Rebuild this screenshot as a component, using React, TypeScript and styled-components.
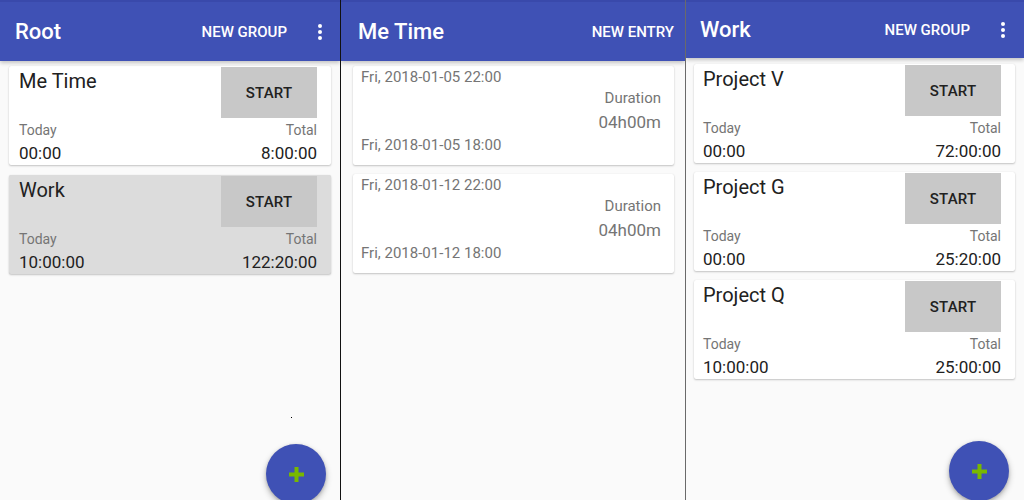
import React from "react";
import styled, { createGlobalStyle } from "styled-components";

const GlobalStyle = createGlobalStyle`
  html, body { margin: 0; padding: 0; background: #fafafa; }
  body { font-family: Roboto, "Noto Sans", "Liberation Sans", sans-serif; -webkit-font-smoothing: antialiased; }
  * { box-sizing: border-box; }
`;

const Screen = styled.div`
  display: flex;
  width: 1024px;
  height: 500px;
  overflow: hidden;
  background: #fafafa;
`;

const Panel = styled.section<{ $w: number }>`
  position: relative;
  width: ${(p) => p.$w}px;
  flex-shrink: 0;
  height: 100%;
  background: #fafafa;
  display: flex;
  flex-direction: column;
  overflow: hidden;
`;

const Divider = styled.div<{ $color: string }>`
  width: 1px;
  flex-shrink: 0;
  height: 100%;
  background: ${(p) => p.$color};
`;

const AppBar = styled.header<{ $h: number; $pl: number; $pr: number }>`
  height: ${(p) => p.$h}px;
  flex-shrink: 0;
  border-top: 2px solid #3949ab;
  background: #3f51b5;
  color: #ffffff;
  display: flex;
  align-items: center;
  padding: 0 ${(p) => p.$pr}px 0 ${(p) => p.$pl}px;
  box-shadow: 0 2px 4px rgba(0, 0, 0, 0.22);
  position: relative;
  z-index: 1;
`;

const BarTitle = styled.h1`
  flex: 1;
  margin: 0;
  font-size: 22px;
  font-weight: 500;
  line-height: 28px;
`;

const BarAction = styled.span`
  font-size: 15px;
  font-weight: 500;
  text-transform: uppercase;
  line-height: 20px;
`;

const MenuDots = styled.div`
  width: 24px;
  margin-left: 21px;
  display: flex;
  flex-direction: column;
  align-items: center;
  gap: 2px;
`;

const Dot = styled.span`
  width: 4px;
  height: 4px;
  border-radius: 50%;
  background: #ffffff;
`;

const List = styled.div<{ $pt: number; $pl: number; $pr: number; $gap: number }>`
  display: flex;
  flex-direction: column;
  gap: ${(p) => p.$gap}px;
  padding: ${(p) => p.$pt}px ${(p) => p.$pr}px 0 ${(p) => p.$pl}px;
`;

const Card = styled.div<{ $selected?: boolean }>`
  height: 99px;
  border-radius: 2px;
  background: ${(p) => (p.$selected ? "#dcdcdc" : "#ffffff")};
  box-shadow: 0 1px 2px rgba(0, 0, 0, 0.22), 0 0 1px rgba(0, 0, 0, 0.1);
  overflow: hidden;
`;

const GroupBody = styled.div<{ $pl: number }>`
  display: grid;
  grid-template-columns: 1fr auto;
  grid-template-rows: 52px 24px 23px;
  padding: 0 14px 0 ${(p) => p.$pl}px;
  height: 100%;
`;

const GroupName = styled.div`
  align-self: start;
  padding-top: 1px;
  font-size: 20px;
  line-height: 28px;
  color: #212121;
`;

const StartButton = styled.button`
  width: 96px;
  height: 51px;
  margin-top: 1px;
  border: none;
  border-radius: 0;
  background: #c8c8c8;
  color: #212121;
  font-family: inherit;
  font-size: 15px;
  font-weight: 500;
  letter-spacing: 0.2px;
  padding: 0;
`;

const Label = styled.div<{ $right?: boolean }>`
  font-size: 14px;
  line-height: 24px;
  color: #757575;
  text-align: ${(p) => (p.$right ? "right" : "left")};
`;

const Value = styled.div<{ $right?: boolean }>`
  font-size: 17px;
  line-height: 23px;
  color: #212121;
  text-align: ${(p) => (p.$right ? "right" : "left")};
`;

const EntryBody = styled.div`
  display: flex;
  flex-direction: column;
  padding: 0 13px 0 8px;
`;

const EntryDate = styled.div<{ $h: number }>`
  height: ${(p) => p.$h}px;
  line-height: ${(p) => p.$h}px;
  font-size: 15px;
  color: #757575;
`;

const EntryLabel = styled.div`
  height: 20px;
  line-height: 20px;
  font-size: 15px;
  color: #757575;
  text-align: right;
`;

const EntryLength = styled.div`
  height: 28px;
  line-height: 28px;
  font-size: 17px;
  color: #757575;
  text-align: right;
`;

const Fab = styled.button<{ $right: number; $bottom: number }>`
  position: absolute;
  right: ${(p) => p.$right}px;
  bottom: ${(p) => p.$bottom}px;
  width: 60px;
  height: 60px;
  border: none;
  border-radius: 50%;
  background: #3f51b5;
  box-shadow: 0 3px 6px rgba(0, 0, 0, 0.28), 0 1px 3px rgba(0, 0, 0, 0.15);
  display: flex;
  align-items: center;
  justify-content: center;
  padding: 0;
`;

const Speck = styled.span`
  position: absolute;
  left: 291px;
  top: 417px;
  width: 1px;
  height: 1px;
  background: #000;
`;

const Plus = () => (
  <svg width="15" height="15" viewBox="0 0 15 15">
    <rect x="0" y="5.5" width="15" height="4" fill="#78b800" />
    <rect x="5.5" y="0" width="4" height="15" fill="#78b800" />
  </svg>
);

type Group = { name: string; today: string; total: string; selected?: boolean };

const GroupItem = ({ g, pl }: { g: Group; pl: number }) => (
  <Card $selected={g.selected}>
    <GroupBody $pl={pl}>
      <GroupName>{g.name}</GroupName>
      <StartButton>START</StartButton>
      <Label>Today</Label>
      <Label $right>Total</Label>
      <Value>{g.today}</Value>
      <Value $right>{g.total}</Value>
    </GroupBody>
  </Card>
);

const entries = [
  { end: "Fri, 2018-01-05 22:00", start: "Fri, 2018-01-05 18:00", dur: "04h00m" },
  { end: "Fri, 2018-01-12 22:00", start: "Fri, 2018-01-12 18:00", dur: "04h00m" },
];

const rootGroups: Group[] = [
  { name: "Me Time", today: "00:00", total: "8:00:00" },
  { name: "Work", today: "10:00:00", total: "122:20:00", selected: true },
];

const workGroups: Group[] = [
  { name: "Project V", today: "00:00", total: "72:00:00" },
  { name: "Project G", today: "00:00", total: "25:20:00" },
  { name: "Project Q", today: "10:00:00", total: "25:00:00" },
];

export default function App() {
  return (
    <>
      <GlobalStyle />
      <Screen>
        <Panel $w={340}>
          <AppBar $h={61} $pl={15} $pr={8}>
            <BarTitle>Root</BarTitle>
            <BarAction>New Group</BarAction>
            <MenuDots>
              <Dot />
              <Dot />
              <Dot />
            </MenuDots>
          </AppBar>
          <List $pt={5} $pl={9} $pr={9} $gap={10}>
            {rootGroups.map((g) => (
              <GroupItem key={g.name} g={g} pl={10} />
            ))}
          </List>
          <Speck />
          <Fab $right={14} $bottom={-4}>
            <Plus />
          </Fab>
        </Panel>
        <Divider $color="#111" />
        <Panel $w={344}>
          <AppBar $h={61} $pl={17} $pr={11}>
            <BarTitle>Me Time</BarTitle>
            <BarAction>New Entry</BarAction>
          </AppBar>
          <List $pt={5} $pl={12} $pr={11} $gap={9}>
            {entries.map((e) => (
              <Card key={e.end}>
                <EntryBody>
                  <EntryDate $h={22}>{e.end}</EntryDate>
                  <EntryLabel>Duration</EntryLabel>
                  <EntryLength>{e.dur}</EntryLength>
                  <EntryDate $h={18}>{e.start}</EntryDate>
                </EntryBody>
              </Card>
            ))}
          </List>
        </Panel>
        <Divider $color="#6a6a6a" />
        <Panel $w={338}>
          <AppBar $h={58} $pl={14} $pr={9}>
            <BarTitle>Work</BarTitle>
            <BarAction>New Group</BarAction>
            <MenuDots>
              <Dot />
              <Dot />
              <Dot />
            </MenuDots>
          </AppBar>
          <List $pt={6} $pl={8} $pr={9} $gap={9}>
            {workGroups.map((g) => (
              <GroupItem key={g.name} g={g} pl={9} />
            ))}
          </List>
          <Fab $right={15} $bottom={-1}>
            <Plus />
          </Fab>
        </Panel>
      </Screen>
    </>
  );
}
